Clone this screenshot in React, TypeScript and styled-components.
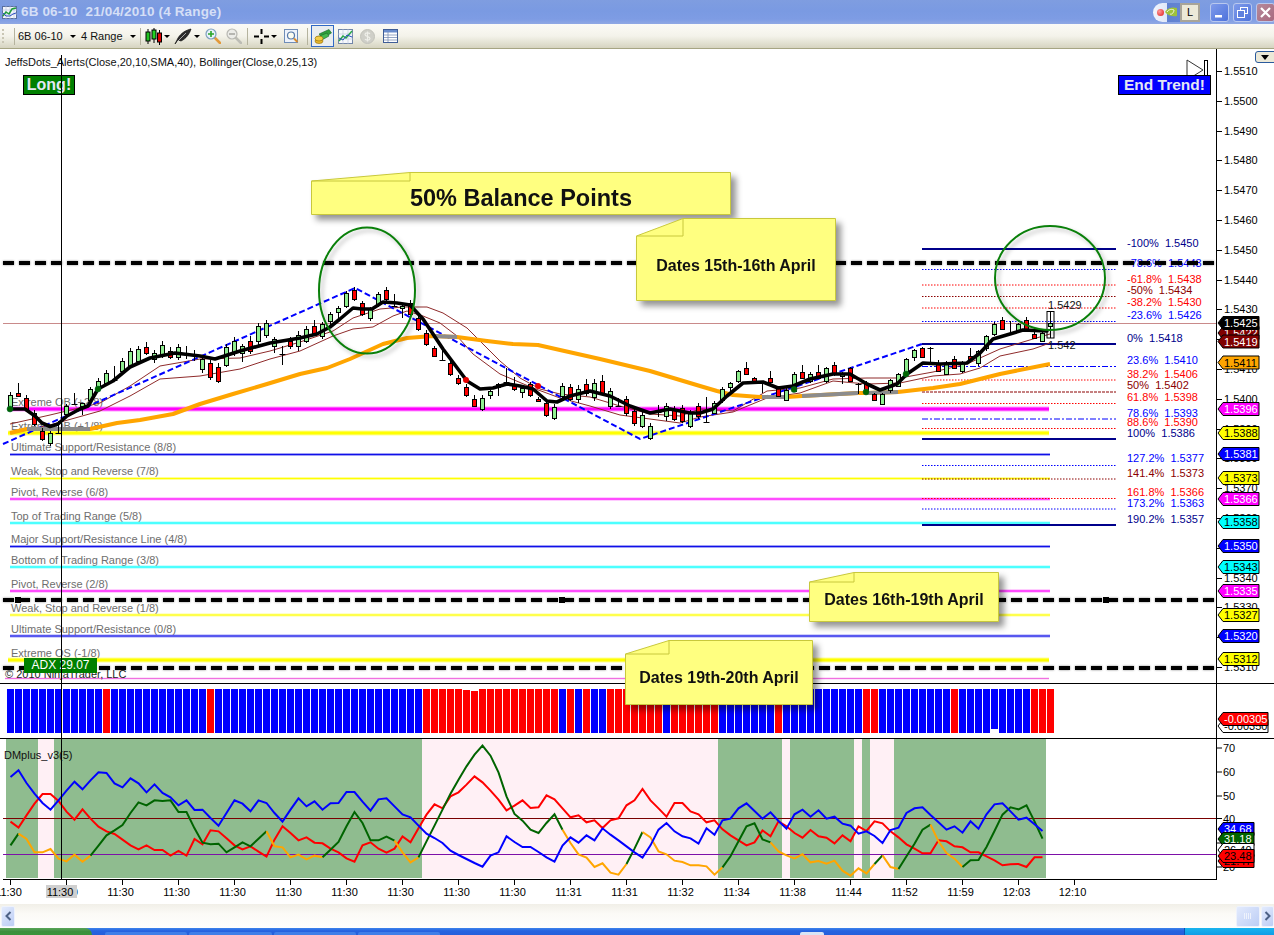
import styled, { createGlobalStyle } from "styled-components";

const GlobalStyle = createGlobalStyle`
  html, body { margin: 0; padding: 0; background: #fff; }
  body { font-family: "Liberation Sans", Arial, sans-serif; overflow: hidden; }
`;

const Window = styled.div`
  width: 1274px;
  height: 935px;
  display: flex;
  flex-direction: column;
  overflow: hidden;
`;

/* ---------- title bar ---------- */
const TitleBar = styled.div`
  flex: none;
  height: 24px;
  display: flex;
  align-items: center;
  padding-left: 2px;
  background: linear-gradient(180deg, #7f9de0 0%, #7a9ae2 45%, #7e9ce4 80%, #90a8e4 100%);
`;
const TitleText = styled.span`
  margin: 0 0 2px 4px;
  font: bold 13.5px "Liberation Sans", Arial, sans-serif;
  letter-spacing: 0.15px;
  white-space: pre;
  color: #d5dff6;
`;
const TitleSpacer = styled.div`
  flex: 1;
`;
const TrayCapsule = styled.div`
  width: 47px;
  height: 19px;
  margin-right: 10px;
  display: flex;
  align-items: center;
  border-radius: 10px 0 0 10px;
  background: linear-gradient(90deg, #f2f5fc 0, #dfe7f8 14px, #5f80d0 14px, #6a8ad8 100%);
  position: relative;
`;
const TrayDot = styled.span`
  width: 7px;
  height: 7px;
  margin-left: 4px;
  border-radius: 50%;
  background: radial-gradient(circle at 35% 35%, #ff9a9a, #e01818);
`;
const TrayL = styled.span`
  position: absolute;
  right: 0;
  top: 0;
  width: 20px;
  height: 19px;
  box-sizing: border-box;
  border: 2px solid #a8a498;
  background: #ece9d8;
  color: #000;
  font-size: 11px;
  line-height: 15px;
  text-align: center;
`;
const WinButton = styled.div<{ $close?: boolean }>`
  width: 19px;
  height: 19px;
  margin-right: 4px;
  box-sizing: border-box;
  border-radius: 3px;
  border: 1px solid #b9c8ee;
  background: ${(p) => (p.$close ? "linear-gradient(135deg,#b58a9c,#a8697e)" : "linear-gradient(135deg,#7f9bea,#4d72dc)")};
  display: flex;
  align-items: center;
  justify-content: center;
  &:last-child {
    margin-right: -1px;
  }
`;

/* ---------- toolbar ---------- */
const Toolbar = styled.div`
  flex: none;
  height: 25px;
  box-sizing: border-box;
  display: flex;
  align-items: center;
  padding-left: 2px;
  background: linear-gradient(180deg, #fbfaf6 0%, #f4f3ea 50%, #d6d4c0 100%);
  border-bottom: 1px solid #a6a583;
`;
const Grip = styled.div`
  width: 2px;
  height: 14px;
  margin-right: 7px;
  background: repeating-linear-gradient(180deg, #c9c6b4 0 2px, transparent 2px 4px);
`;
const ToolSep = styled.div`
  width: 1px;
  height: 17px;
  margin: 0 3px;
  background: #b5b39e;
`;
const ToolText = styled.span<{ $w: number }>`
  width: ${(p) => p.$w}px;
  font-size: 11px;
  color: #111;
  white-space: nowrap;
  display: flex;
  align-items: center;
  gap: 7px;
`;
const Caret = styled.i`
  width: 0;
  height: 0;
  border-left: 3px solid transparent;
  border-right: 3px solid transparent;
  border-top: 3px solid #000;
`;
const ToolIcon = styled.div<{ $w: number; $active?: boolean }>`
  width: ${(p) => p.$w}px;
  height: 22px;
  box-sizing: border-box;
  display: flex;
  align-items: center;
  justify-content: center;
  gap: 2px;
  flex: none;
  ${(p) => (p.$active ? "border: 1px solid #316ac5; background: #e9edef;" : "")}
`;

/* ---------- chart ---------- */
const ChartArea = styled.div`
  position: relative;
  flex: none;
  height: 855px;
  display: flex;
  flex-direction: column;
  background: #fff;
`;
const Pane = styled.div<{ $h: number; $divider?: boolean }>`
  flex: none;
  height: ${(p) => p.$h}px;
  box-sizing: border-box;
  display: flex;
  ${(p) => (p.$divider ? "border-top: 1px solid #000;" : "")}
`;
const Plot = styled.svg`
  display: block;
  flex: none;
  width: 1216px;
  height: 100%;
  font-family: "Liberation Sans", Arial, sans-serif;
  font-size: 11px;
`;
const PriceAxis = styled.svg`
  display: block;
  flex: none;
  width: 58px;
  height: 100%;
  border-left: 1px solid #000;
  box-sizing: border-box;
  font-family: "Liberation Sans", Arial, sans-serif;
  font-size: 11px;
`;
const TimeStrip = styled.svg`
  display: block;
  width: 1274px;
  height: 100%;
  font-family: "Liberation Sans", Arial, sans-serif;
  font-size: 11px;
`;
const Level = styled.text`
  fill: #6e6e6e;
`;
const Ring = styled.ellipse`
  fill: none;
  stroke: #0a800a;
  stroke-width: 2;
  filter: drop-shadow(3px 3px 2px rgba(0, 0, 0, 0.28));
`;
const HeavyDash = styled.line`
  stroke: #000;
  stroke-width: 4;
  stroke-dasharray: 11 5;
  filter: drop-shadow(0 0 1px rgba(0, 0, 0, 0.45));
`;
const Crosshair = styled.div`
  position: absolute;
  left: 61px;
  top: 6px;
  height: 824px;
  width: 1px;
  background: #000;
  z-index: 3;
`;
const Badge = styled.div<{ $left: number; $w: number; $bg: string; $size: number }>`
  position: absolute;
  left: ${(p) => p.$left}px;
  top: 26px;
  width: ${(p) => p.$w}px;
  height: 20px;
  box-sizing: border-box;
  border: 1px solid #000;
  background: ${(p) => p.$bg};
  color: #e4e8f4;
  font: bold ${(p) => p.$size}px/18px "Liberation Sans", Arial, sans-serif;
  text-align: center;
  white-space: nowrap;
`;
const AdxBadge = styled.div`
  position: absolute;
  left: 24px;
  top: 609px;
  width: 73px;
  height: 15px;
  background: #008000;
  color: #fff;
  font-size: 12px;
  line-height: 15px;
  text-align: center;
`;
const CornerButton = styled.div`
  position: absolute;
  left: 1255px;
  top: 2px;
  width: 24px;
  height: 12px;
  box-sizing: border-box;
  border: 1px solid #2a5a9c;
  border-radius: 3px;
  background: #ece9d8;
  display: flex;
  justify-content: center;
  padding-top: 3px;
  padding-right: 5px;
  z-index: 2;
`;
const CornerCaret = styled.i`
  width: 0;
  height: 0;
  border-left: 4px solid transparent;
  border-right: 4px solid transparent;
  border-top: 5px solid #000;
`;
const Note = styled.div<{ $left: number; $top: number; $w: number; $h: number }>`
  position: absolute;
  left: ${(p) => p.$left}px;
  top: ${(p) => p.$top}px;
  width: ${(p) => p.$w}px;
  height: ${(p) => p.$h}px;
  display: flex;
  align-items: center;
  justify-content: center;
  filter: drop-shadow(5px 5px 3px rgba(0, 0, 0, 0.42));
  z-index: 4;
`;
const NoteShape = styled.svg`
  position: absolute;
  inset: 0;
  overflow: visible;
`;
const NoteText = styled.span<{ $size: number; $dy: number }>`
  position: relative;
  margin-top: ${(p) => p.$dy}px;
  font: bold ${(p) => p.$size}px "Liberation Sans", Arial, sans-serif;
  color: #111;
  white-space: nowrap;
`;

/* ---------- scrollbar + taskbar ---------- */
const ScrollBar = styled.div`
  flex: none;
  height: 24px;
  display: flex;
  align-items: center;
  background: linear-gradient(180deg, #f1efe8 0%, #fbfaf6 40%, #fefefd 100%);
`;
const ScrollButton = styled.div<{ $w: number }>`
  width: ${(p) => p.$w}px;
  height: 21px;
  box-sizing: border-box;
  border: 1px solid #eef2fc;
  border-radius: 2px;
  background: linear-gradient(135deg, #e3ebfd, #bccdf5);
  display: flex;
  align-items: center;
  justify-content: center;
  flex: none;
  margin-left: 1px;
`;
const ScrollTrack = styled.div`
  flex: 1;
`;
const Taskbar = styled.div`
  flex: none;
  height: 7px;
  display: flex;
  background: linear-gradient(180deg, #3c83ec 0%, #2663e0 40%, #245edb 100%);
`;
const StartButton = styled.div`
  width: 92px;
  margin-right: 13px;
  border-radius: 0 10px 0 0;
  background: linear-gradient(180deg, #5aa55a 0%, #3c8f3c 50%, #389438 100%);
`;
const TaskItem = styled.div<{ $w: number; $light?: boolean }>`
  width: ${(p) => p.$w}px;
  margin: 4px 2px 0 0;
  border-radius: 2px 2px 0 0;
  background: ${(p) => (p.$light ? "#d9e4f5" : "#3f7ee8")};
`;
const TaskGap = styled.div`
  flex: 1;
`;
const TrayArea = styled.div`
  width: 89px;
  background: linear-gradient(180deg, #19b4ee, #0f9de6);
  border-left: 1px solid #0b4fb5;
`;

/* ---------- data ---------- */
type Pt = [number, number];
const pts = (list: Pt[]) => list.map((p) => p.join(",")).join(" ");

const priceY = (p: number) => 70 + (1.551 - p) * 29800;
const barX = (i: number) => 10.5 + 8 * i;
const dmY = (z: number) => 682 + z / 3;

// top, bottom, kind (u up, d down, x doji), wick top, wick bottom
type Candle = [number, number, "u" | "d" | "x", number?, number?];
const candles: Candle[] = [
  [394, 408, "u", 391, 410], [392, 395, "d", 382, 395], [397, 408, "d"], [412, 423, "d"], [430, 438, "d"],
  [432, 442, "u", 430, 445], [431, 432, "x", 420, 433], [405, 413, "u", 403, 415], [402, 403, "x", 392, 403], [402, 405, "u", 402, 414],
  [388, 399, "u", 386, 401], [380, 387, "u", 377, 390], [372, 382, "u"], [378, 379, "x", 365, 380], [360, 370, "u"],
  [350, 365, "u"], [348, 360, "u"], [346, 352, "d", 341, 354], [352, 358, "u", 349, 362], [344, 354, "u", 340, 357],
  [350, 356, "d", 346, 358], [346, 356, "u", 343, 359], [351, 352, "x", 345, 358], [352, 353, "x", 349, 360], [358, 368, "u", 356, 372],
  [362, 376, "d", 359, 379], [366, 380, "d", 362, 382], [346, 364, "u"], [340, 352, "u", 336, 355], [345, 352, "u", 343, 361],
  [340, 350, "d", 335, 353], [325, 340, "u", 322, 344], [322, 334, "u", 319, 337], [338, 345, "u", 336, 352], [352, 353, "x", 345, 364],
  [340, 345, "d", 336, 348], [334, 345, "u", 330, 350], [328, 340, "u", 325, 342], [325, 332, "d", 319, 334], [323, 335, "u", 321, 338],
  [313, 320, "u", 311, 325], [307, 311, "u", 305, 320], [292, 305, "u", 290, 307], [289, 298, "d", 286, 300], [302, 313, "d", 300, 315],
  [308, 317, "u", 306, 320], [293, 303, "u", 291, 306], [289, 298, "d", 286, 300], [304, 305, "x", 293, 306], [305, 307, "u", 303, 317],
  [302, 313, "d"], [317, 328, "d"], [332, 343, "d"], [347, 355, "d", 345, 356], [358, 359, "x", 346, 359],
  [362, 373, "d"], [377, 382, "d"], [386, 394, "d"], [398, 405, "d", 394, 406], [397, 408, "u"],
  [390, 394, "u", 389, 398], [383, 386, "u", 382, 395], [380, 381, "x", 367, 381], [383, 388, "d", 376, 390], [387, 391, "u", 386, 397],
  [383, 394, "d", 381, 396], [398, 400, "d", 396, 401], [402, 414, "d"], [406, 417, "u"], [385, 395, "u", 382, 399],
  [386, 398, "d", 383, 400], [388, 398, "u", 384, 402], [383, 392, "d", 378, 395], [382, 396, "u", 378, 400], [380, 392, "d", 374, 394],
  [390, 405, "u", 387, 408], [404, 405, "x", 397, 406], [398, 412, "d", 395, 415], [410, 422, "d", 407, 425], [414, 425, "u", 411, 427],
  [425, 437, "u", 422, 439], [410, 411, "x", 404, 416], [405, 415, "u", 402, 420], [408, 418, "d", 405, 420], [407, 420, "d", 404, 422],
  [412, 425, "u", 409, 427], [405, 415, "d", 402, 418], [420, 421, "x", 396, 421], [402, 412, "u", 400, 413], [388, 399, "u", 386, 402],
  [382, 386, "u", 381, 392], [370, 380, "u", 369, 382], [367, 373, "d", 361, 374], [377, 380, "d", 376, 382], [380, 381, "x", 380, 392],
  [377, 381, "d", 370, 383], [387, 395, "d", 385, 396], [389, 399, "u", 387, 400], [373, 390, "u", 371, 391], [371, 377, "d", 364, 378],
  [373, 380, "u", 371, 382], [371, 377, "d", 364, 378], [367, 380, "u", 366, 382], [364, 373, "d", 361, 375], [372, 375, "u", 371, 383],
  [367, 380, "d", 366, 381], [382, 383, "x", 382, 393], [382, 390, "d", 380, 392], [393, 399, "d", 392, 400], [393, 403, "u", 392, 404],
  [379, 389, "u", 378, 392], [373, 385, "u", 372, 386], [358, 372, "u", 357, 374], [349, 356, "u", 348, 360], [347, 356, "d", 346, 357],
  [346, 347, "x", 346, 362], [363, 370, "d", 359, 371], [362, 373, "u", 360, 374], [358, 367, "d", 355, 368], [362, 370, "u", 360, 372],
  [355, 358, "d", 347, 359], [350, 362, "u", 349, 365], [335, 347, "u", 334, 350], [323, 333, "u", 321, 335], [319, 328, "d", 316, 329],
  [331, 332, "x", 320, 332], [323, 330, "u", 322, 332], [319, 328, "d", 316, 329], [333, 337, "d", 326, 338], [332, 340, "u", 331, 341],
  [322, 325, "u", 311, 337],
];

const blackLine: Pt[] = [
  [10, 408], [25, 408], [35, 415], [42, 422], [50, 425.5], [58, 423], [67, 415], [80, 408], [88, 405], [98, 388], [113, 380], [130, 366],
  [150, 357], [175, 352], [200, 355], [215, 358], [240, 350], [270, 342], [300, 337], [317, 333], [330, 326], [340, 318], [353, 307], [362, 308],
  [372, 308], [383, 301], [397, 302], [410, 304], [423, 318], [443, 348], [467, 380], [480, 388], [493, 387], [507, 383], [520, 385], [533, 388],
  [547, 400], [557, 401], [570, 395], [590, 390], [610, 395], [630, 405], [650, 412], [670, 408], [690, 412], [700, 412], [713, 408], [727, 395],
  [743, 382], [763, 381], [778, 387], [793, 385], [810, 378], [833, 373], [850, 373], [867, 383], [880, 389], [897, 383], [907, 373], [923, 362],
  [940, 363], [967, 362], [980, 352], [993, 338], [1010, 333], [1023, 329], [1047, 330],
];

const orangeLine: Pt[] = [
  [10, 432], [27, 428], [90, 428], [117, 422], [140, 419], [173, 413], [200, 403], [233, 393], [267, 383], [300, 373], [327, 367], [350, 358],
  [383, 343], [407, 337], [433, 335], [457, 336], [487, 340], [513, 343], [538, 344], [560, 349], [600, 358], [650, 370], [700, 385], [717, 390],
  [733, 394], [760, 396], [787, 396], [802, 395], [858, 392], [867, 392], [898, 391], [933, 387], [960, 383], [1000, 373], [1050, 363],
];
const greyStretches: Pt[][] = [
  [[27, 428], [90, 428]],
  [[433, 335], [457, 336]],
  [[762, 396], [787, 396]],
  [[802, 395], [858, 392]],
  [[867, 392], [898, 391]],
];

const bandUpper: Pt[] = [
  [10, 423], [50, 414], [100, 402], [130, 385], [160, 365], [200, 358], [240, 357], [270, 350], [300, 341], [333, 330], [353, 317], [380, 308],
  [403, 306], [427, 306], [443, 312], [467, 327], [480, 340], [500, 360], [520, 377], [540, 388], [560, 393], [590, 396], [620, 405], [650, 413],
  [680, 415], [700, 408], [733, 410], [767, 390], [800, 387], [833, 378], [867, 377], [900, 377], [933, 371], [967, 363], [980, 357], [1000, 348],
  [1033, 338], [1050, 333],
];
const bandLower: Pt[] = [
  [10, 432], [50, 424], [100, 410], [130, 395], [160, 378], [200, 375], [240, 368], [270, 358], [300, 350], [333, 335], [353, 328], [373, 326],
  [393, 315], [407, 310], [423, 315], [440, 322], [457, 335], [473, 353], [500, 373], [533, 387], [560, 397], [590, 405], [620, 414], [650, 418],
  [680, 422], [700, 416], [733, 411], [767, 397], [800, 392], [833, 380], [867, 383], [900, 382], [933, 375], [960, 373], [980, 367], [1000, 355],
  [1033, 348], [1050, 342],
];

const darkDots: Pt[] = [[10, 408], [98, 388], [794, 388.5], [866, 391], [906, 373]];
const redDots: Pt[] = [[466, 379], [538, 385]];

const murreyLines: [number, number, string, number, number][] = [
  [408, 4, "#ff00ff", 10, 1049],
  [432, 4, "#ffff00", 8, 1049],
  [453.5, 2, "#1010e8", 10, 1050],
  [477.5, 2, "#ffff00", 10, 1050],
  [498, 2, "#ff00ff", 10, 1050],
  [522, 2, "#00ffff", 10, 1050],
  [545.5, 2, "#1010e8", 10, 1050],
  [566, 2, "#00ffff", 10, 1050],
  [590, 2, "#ff00ff", 10, 1050],
  [614, 2, "#ffff00", 10, 1050],
  [635, 2, "#1010e8", 10, 1050],
  [659, 4, "#ffff00", 8, 1049],
  [677.5, 1, "#f070e0", 5, 1049],
];
const murreyLabels: [string, number][] = [
  ["Extreme OB (+2/8)", 405],
  ["Extreme OB (+1/8)", 429],
  ["Ultimate Support/Resistance (8/8)", 450],
  ["Weak, Stop and Reverse (7/8)", 474],
  ["Pivot, Reverse (6/8)", 495],
  ["Top of Trading Range (5/8)", 519],
  ["Major Support/Resistance Line (4/8)", 542],
  ["Bottom of Trading Range (3/8)", 563],
  ["Pivot, Reverse (2/8)", 587],
  ["Weak, Stop and Reverse (1/8)", 611],
  ["Ultimate Support/Resistance (0/8)", 632],
  ["Extreme OS (-1/8)", 656],
];

const NAVY = "#00008b";
const BLUE = "#0000ff";
const RED = "#ff0000";
const MAROON = "#8b0000";
const DOT = "1.5 1.5";
const DASHDOT = "6 2 2 2";
const fibs: [string, string, number, number, string, string | null][] = [
  ["-100%", "1.5450", 248, 246, NAVY, null],
  ["-78.6%", "1.5443", 268.5, 266, BLUE, DOT],
  ["-61.8%", "1.5438", 284, 282, RED, DOT],
  ["-50%", "1.5434", 295.5, 293, MAROON, DOT],
  ["-38.2%", "1.5430", 307, 305, RED, DOT],
  ["-23.6%", "1.5426", 320.5, 318, BLUE, DOT],
  ["0%", "1.5418", 343, 341, NAVY, null],
  ["23.6%", "1.5410", 365.5, 363.5, BLUE, DASHDOT],
  ["38.2%", "1.5406", 379, 377, RED, DOT],
  ["50%", "1.5402", 391, 388.5, MAROON, "3 1"],
  ["61.8%", "1.5398", 402.5, 400, RED, DOT],
  ["78.6%", "1.5393", 418, 416, BLUE, DASHDOT],
  ["88.6%", "1.5390", 427.5, 425, RED, DOT],
  ["100%", "1.5386", 438, 436, NAVY, null],
  ["127.2%", "1.5377", 464.5, 461.5, BLUE, DOT],
  ["141.4%", "1.5373", 478, 476, MAROON, DOT],
  ["161.8%", "1.5366", 497.5, 495, RED, DOT],
  ["173.2%", "1.5363", 508, 506, BLUE, DOT],
  ["190.2%", "1.5357", 524, 522, NAVY, null],
];

const priceTicks = [
  "1.5510", "1.5500", "1.5490", "1.5480", "1.5470", "1.5460", "1.5450", "1.5440", "1.5430", "1.5420", "1.5410",
  "1.5400", "1.5390", "1.5380", "1.5370", "1.5360", "1.5350", "1.5340", "1.5330", "1.5320", "1.5310",
];
const priceTags: [string, number, string, string][] = [
  ["1.5422", 332, "#800000", "#fff"],
  ["1.5425", 322, "#000", "#fff"],
  ["1.5419", 340.5, "#800000", "#fff"],
  ["1.5411", 361.5, "#ffa500", "#000"],
  ["1.5396", 408, "#ff00ff", "#fff"],
  ["1.5388", 432, "#ffff00", "#000"],
  ["1.5381", 453, "#0000ff", "#fff"],
  ["1.5373", 477, "#ffff00", "#000"],
  ["1.5366", 498, "#ff00ff", "#fff"],
  ["1.5358", 521, "#00ffff", "#000"],
  ["1.5350", 545, "#0000ff", "#fff"],
  ["1.5343", 566, "#00ffff", "#000"],
  ["1.5335", 590, "#ff00ff", "#fff"],
  ["1.5327", 614, "#ffff00", "#000"],
  ["1.5320", 635, "#0000ff", "#fff"],
  ["1.5312", 658, "#ffff00", "#000"],
];

const redBars = new Set([
  12, 25, 52, 53, 54, 55, 56, 57, 58, 59, 60, 61, 62, 63, 64, 65, 66, 67, 68, 70, 72, 75, 76, 77, 78, 79, 80, 81, 83, 84, 85, 86,
  87, 88, 96, 107, 108, 118, 128, 129, 130,
]);

const dmBands: [number, number, string][] = [
  [6, 38, "#8fbc8f"],
  [38, 54, "#fff0f5"],
  [54, 422, "#8fbc8f"],
  [422, 718, "#fff0f5"],
  [718, 782, "#8fbc8f"],
  [782, 790, "#fff0f5"],
  [790, 854, "#8fbc8f"],
  [854, 862, "#fff0f5"],
  [862, 870, "#8fbc8f"],
  [870, 894, "#fff0f5"],
  [894, 1046, "#8fbc8f"],
];

const diPlus = [
  282, 262, 300, 332, 360, 380, 352, 323, 296, 319, 292, 268, 270, 301, 313, 286, 301, 328, 304, 330, 343, 367, 352, 381, 380, 405, 428, 390, 352, 362,
  385, 352, 360, 390, 416, 380, 346, 370, 355, 380, 361, 360, 327, 327, 356, 383, 349, 346, 370, 394, 403, 428, 452, 465, 480, 503, 516, 528, 540, 551,
  518, 508, 460, 477, 492, 492, 507, 523, 536, 488, 463, 479, 457, 472, 436, 455, 472, 490, 508, 524, 487, 440, 420, 445, 460, 466, 482, 436, 455, 412,
  407, 376, 361, 384, 407, 388, 414, 437, 394, 380, 401, 382, 407, 401, 422, 428, 452, 445, 459, 480, 441, 434, 390, 376, 373, 396, 418, 440, 430, 449,
  415, 437, 394, 364, 361, 385, 410, 404, 424, 444,
];
const diMinus = [
  416, 434, 397, 362, 333, 333, 354, 386, 410, 379, 407, 431, 445, 453, 470, 487, 499, 487, 501, 501, 518, 504, 518, 468, 484, 442, 445, 466, 487, 499,
  490, 506, 521, 470, 430, 450, 472, 463, 479, 481, 497, 508, 526, 536, 487, 478, 497, 509, 497, 460, 478, 436, 395, 364, 376, 340, 328, 305, 280, 298,
  323, 350, 382, 368, 352, 375, 373, 337, 349, 376, 403, 397, 418, 412, 435, 412, 406, 367, 352, 318, 352, 376, 401, 360, 360, 385, 394, 418, 412, 439,
  457, 472, 487, 478, 442, 460, 415, 430, 450, 464, 441, 460, 464, 481, 457, 475, 430, 444, 415, 421, 445, 463, 484, 497, 511, 511, 472, 475, 490, 493,
  508, 508, 520, 532, 547, 544, 543, 552, 523, 523,
];
const adx = [
  487, 452, 468, 508, 508, 498, 527, 535, 515, 536, 518, 488, 457, 442, 426, 390, 358, 367, 352, 354, 352, 387, 387, 436, 479, 484, 482, 508, 493, 478,
  490, 467, 445, 490, 493, 523, 515, 529, 518, 523, 500, 477, 430, 387, 420, 472, 472, 461, 473, 508, 538, 523, 475, 428, 380, 332, 290, 250, 215, 188,
  218, 268, 340, 393, 413, 440, 450, 420, 394, 440, 480, 514, 524, 552, 541, 569, 575, 543, 497, 447, 463, 505, 514, 533, 537, 547, 547, 550, 575, 553,
  520, 475, 430, 421, 469, 478, 505, 517, 526, 514, 538, 534, 542, 533, 563, 578, 556, 571, 543, 517, 552, 558, 520, 482, 440, 425, 475, 510, 527, 552,
  532, 531, 492, 444, 395, 373, 379, 367, 415, 467,
];
// adx colour flips between rising and falling stretches
const adxStretches: [number, number, string][] = [
  [0, 1, "#006400"], [1, 10, "#ffa500"], [10, 32, "#006400"], [32, 39, "#ffa500"], [39, 48, "#006400"], [48, 51, "#ffa500"],
  [51, 69, "#006400"], [69, 77, "#ffa500"], [77, 79, "#006400"], [79, 89, "#ffa500"], [89, 95, "#006400"], [95, 108, "#ffa500"],
  [108, 109, "#006400"], [109, 111, "#ffa500"], [111, 115, "#006400"], [115, 119, "#ffa500"], [119, 129, "#006400"],
];
const dmLine = (values: number[], from = 0, to = values.length - 1) =>
  pts(values.slice(from, to + 1).map((z, i): Pt => [barX(from + i), dmY(z)]));

const timeLabels = [
  "11:30", "11:30", "11:30", "11:30", "11:30", "11:30", "11:30", "11:30", "11:30", "11:30", "11:31", "11:31", "11:32", "11:34", "11:38", "11:44",
  "11:52", "11:59", "12:03", "12:10",
];

/* ---------- little drawings ---------- */
const Tag = ({ y, label, fill, color, right = 1259 }: { y: number; label: string; fill: string; color: string; right?: number }) => (
  <g>
    <polygon
      points={pts([[1218, y], [1223, y - 6.5], [right, y - 6.5], [right, y + 6.5], [1223, y + 6.5]])}
      fill={fill}
      stroke="#000"
    />
    <text x={1224} y={y + 4} fill={color}>
      {label}
    </text>
  </g>
);

const AppIcon = () => (
  <svg width="15" height="15" viewBox="0 0 15 15">
    <rect x="0.5" y="1.5" width="14" height="12" fill="#f4f6fb" stroke="#5a6f9e" />
    <path d="M0 5h15M0 9h15M4 1v13M8 1v13M12 1v13" stroke="#b7c4de" strokeWidth="0.6" />
    <polyline points="1,11 4,7 7,9 10,4 14,3" fill="none" stroke="#1f9c3a" strokeWidth="1.5" />
    <polyline points="1,8 4,11 8,11 11,9 14,8" fill="none" stroke="#2c4fc2" strokeWidth="1" />
  </svg>
);
const CandlesIcon = () => (
  <svg width="17" height="17" viewBox="0 0 17 17">
    <path d="M3 1v15M9 0v15M14.500 2v15" stroke="#000" />
    <rect x="1" y="4" width="4" height="9" fill="#22c322" stroke="#000" />
    <rect x="7" y="2" width="4" height="9" fill="#22d322" stroke="#000" />
    <rect x="12.500" y="5" width="4" height="9" fill="#e00000" stroke="#000" />
  </svg>
);
const PenIcon = () => (
  <svg width="18" height="17" viewBox="0 0 18 17">
    <path d="M1 16 L4 10 C7 5 12 2 17 1 C16 5 12 11 7 13 L4 12 Z" fill="#2c2c2c" stroke="#000" strokeWidth="0.6" />
    <path d="M3 14 L12 5" stroke="#c8c8c8" strokeWidth="0.8" />
  </svg>
);
const ZoomIcon = ({ active, plus }: { active: boolean; plus: boolean }) => (
  <svg width="16" height="16" viewBox="0 0 16 16">
    <path d="M9.500 9.500L15 15" stroke={active ? "#e39a3b" : "#bdbdb5"} strokeWidth="2.600" strokeLinecap="round" />
    <circle cx="6" cy="6" r="5" fill={active ? "#e8f2fa" : "#ecece8"} stroke={active ? "#7e9fbe" : "#b8b8b2"} strokeWidth="1.200" />
    <path d={plus ? "M3 6h6M6 3v6" : "M3 6h6"} stroke={active ? "#2aa52a" : "#a9a9a3"} strokeWidth="1.600" />
  </svg>
);
const CrossIcon = () => (
  <svg width="15" height="15" viewBox="0 0 15 15">
    <path d="M0 7.500h5M10 7.500h5M7.500 0v5M7.500 10v5" stroke="#000" strokeWidth="2" />
  </svg>
);
const FindIcon = () => (
  <svg width="15" height="16" viewBox="0 0 15 16">
    <rect x="0.500" y="1.500" width="13" height="13" fill="#eef3fb" stroke="#6f8db8" />
    <circle cx="7" cy="7.500" r="3.500" fill="#fdfdf0" stroke="#5678a8" strokeWidth="1.200" />
    <path d="M10 10.500l3.500 3.500" stroke="#d98c2c" strokeWidth="2" />
  </svg>
);
const MoneyIcon = () => (
  <svg width="18" height="17" viewBox="0 0 18 17">
    <path d="M5 6 L15 1.500 L17.500 5 L9 10 Z" fill="#2f9e3a" stroke="#17652a" strokeWidth="0.600" />
    <path d="M3 9 L13 5 L15 8 L7 12.500 Z" fill="#43b84d" stroke="#17652a" strokeWidth="0.600" />
    <ellipse cx="5" cy="13" rx="4" ry="2.500" fill="#e9b82c" stroke="#97740e" strokeWidth="0.700" />
    <ellipse cx="5" cy="10.500" rx="4" ry="2.500" fill="#f3cc45" stroke="#97740e" strokeWidth="0.700" />
  </svg>
);
const ChartIcon = () => (
  <svg width="15" height="15" viewBox="0 0 15 15">
    <rect x="0.500" y="0.500" width="14" height="14" fill="#f6f8fc" stroke="#7286a8" />
    <path d="M0 5h15M0 10h15M5 0v15M10 0v15" stroke="#b8c4d8" strokeWidth="0.600" />
    <polyline points="1,12 5,7 8,9 14,2" fill="none" stroke="#2aa84a" strokeWidth="1.500" />
    <polyline points="1,9 5,11 9,6 14,8" fill="none" stroke="#274fbe" strokeWidth="1" />
  </svg>
);
const CoinIcon = () => (
  <svg width="15" height="15" viewBox="0 0 15 15">
    <circle cx="7.500" cy="7.500" r="7" fill="#cfcfc8" stroke="#c2c2ba" />
    <path d="M10 5c-1-1.500-5-1.500-5 .5 0 2.500 5 1.500 5 4 0 2-4 2-5 .5M7.500 2.500v10" fill="none" stroke="#efefe9" strokeWidth="1.200" />
  </svg>
);
const GridIcon = () => (
  <svg width="15" height="14" viewBox="0 0 15 14">
    <rect x="0.500" y="0.500" width="14" height="13" fill="#fff" stroke="#3f5d96" />
    <rect x="1" y="1" width="13" height="2.500" fill="#6a8ccc" />
    <path d="M1 6h13M1 8.500h13M1 11h13M5 3v10" stroke="#7b8fb5" strokeWidth="0.800" />
  </svg>
);
const MinGlyph = () => (
  <svg width="11" height="11" viewBox="0 0 11 11">
    <rect x="1" y="8" width="7" height="2.500" fill="#fff" />
  </svg>
);
const RestoreGlyph = () => (
  <svg width="11" height="11" viewBox="0 0 11 11" fill="none" stroke="#fff">
    <rect x="3.500" y="0.500" width="7" height="6" />
    <rect x="0.500" y="3.500" width="7" height="7" fill="#5e80de" />
  </svg>
);
const CloseGlyph = () => (
  <svg width="11" height="11" viewBox="0 0 11 11">
    <path d="M1 1l9 9M10 1l-9 9" stroke="#fff" strokeWidth="2.200" />
  </svg>
);
const NvidiaGlyph = () => (
  <svg width="14" height="12" viewBox="0 0 14 12">
    <path d="M1 6C4 1 10 1 13 2v8C9 11 4 10 1 6z" fill="#9ec23a" />
    <path d="M3 6c2-3 5-3 7-2 0 2-2 5-4 4" fill="none" stroke="#f4f6e6" />
  </svg>
);
const ChevronIcon = ({ dir }: { dir: "left" | "right" }) => (
  <svg width="7" height="10" viewBox="0 0 7 10">
    <path d={dir === "left" ? "M5.500 1L1.500 5l4 4" : "M1.500 1l4 4-4 4"} fill="none" stroke="#4d6185" strokeWidth="2" />
  </svg>
);
const ThumbGrip = () => (
  <svg width="8" height="8" viewBox="0 0 8 8">
    <path d="M.5 1v6M2.500 1v6M4.500 1v6M6.500 1v6" stroke="#eef2fc" />
  </svg>
);

const Callout = ({ left, top, w, h, earX, earY, size, dy, children }: {
  left: number; top: number; w: number; h: number; earX: number; earY: number; size: number; dy: number; children: string;
}) => (
  <Note $left={left} $top={top - 48} $w={w} $h={h}>
    <NoteShape width={w} height={h} viewBox={`0 0 ${w} ${h}`}>
      <polygon points={pts([[0.5, earY], [earX, 0.5], [w - 0.5, 0.5], [w - 0.5, h - 0.5], [0.5, h - 0.5]])} fill="#ffff80" stroke="#c8c83c" />
      <path d={`M0.500 ${earY}H${earX}V0.500`} fill="none" stroke="#c8c83c" />
    </NoteShape>
    <NoteText $size={size} $dy={dy}>{children}</NoteText>
  </Note>
);

/* ---------- panes ---------- */
const MainPlot = () => (
  <Plot viewBox="0 48 1216 634">
    <text x={5} y={65} fill="#111">JeffsDots_Alerts(Close,20,10,SMA,40), Bollinger(Close,0.25,13)</text>
    <polygon points="1187,59 1187,79 1203,69" fill="#fff" stroke="#333" />
    <rect x={1204.500} y={59.500} width={3} height={20} fill="#fff" stroke="#000" />

    <line x1={3} x2={1216} y1={322.500} y2={322.500} stroke="#c98a8a" />

    {murreyLabels.map(([label, y]) => (
      <Level key={label + y} x={11} y={y}>{label}</Level>
    ))}
    {murreyLines.map(([y, w, color, x1, x2]) => (
      <g key={y}>
        <line x1={x1} x2={x2} y1={y} y2={y} stroke={color} strokeWidth={w + 1} strokeOpacity={0.4} />
        <line x1={x1} x2={x2} y1={y} y2={y} stroke={color} strokeWidth={w - 1 || 1} />
      </g>
    ))}
    <text x={5} y={677} fill="#222">© 2010 NinjaTrader, LLC</text>

    {fibs.map(([pct, value, y, labelY, color, dash]) => (
      <g key={pct}>
        <line x1={922} x2={1116} y1={y} y2={y} stroke={color} strokeWidth={dash ? 1 : 2} strokeDasharray={dash ?? undefined} />
        <text x={1127} y={labelY - 0.5} fill={color}>{pct}{"\u00a0\u00a0"}{value}</text>
      </g>
    ))}
    <text x={1048} y={308} fill="#111">1.5429</text>
    <text x={1048} y={348} fill="#111">1.542</text>

    <polyline points={pts(bandUpper)} fill="none" stroke="#8f2b2b" strokeWidth={1} />
    <polyline points={pts(bandLower)} fill="none" stroke="#8f2b2b" strokeWidth={1} />
    <polyline points="3,443 355,287 640,438 922,343" fill="none" stroke="#0000ff" strokeWidth={2} strokeDasharray="6 3" />
    <polyline points={pts(orangeLine)} fill="none" stroke="#ffa500" strokeWidth={4} strokeLinejoin="round" />
    {greyStretches.map((s) => (
      <polyline key={s[0][0]} points={pts(s)} fill="none" stroke="#8c8c8c" strokeWidth={4} />
    ))}

    {candles.map(([top, bottom, kind, wt, wb], i) => {
      const x = Math.floor(barX(i)) + 0.5;
      const wickTop = wt ?? top - 3;
      const wickBottom = wb ?? bottom + 2;
      return (
        <g key={i}>
          <line x1={x} x2={x} y1={wickTop} y2={wickBottom} stroke="#000" />
          {kind === "x" ? (
            <line x1={x - 3} x2={x + 3} y1={bottom + 0.5} y2={bottom + 0.5} stroke="#000" />
          ) : (
            <rect x={x - 2} y={top + 0.5} width={4} height={bottom - top} fill={kind === "u" ? "#90ee90" : "#ff0000"} stroke="#000" />
          )}
        </g>
      );
    })}
    <rect x={1047} y={310.500} width={7} height={26.500} fill="none" stroke="#000" />

    <polyline points={pts(blackLine)} fill="none" stroke="#000" strokeWidth={3.600} strokeLinejoin="round" strokeLinecap="round" />
    {darkDots.map(([x, y]) => (
      <circle key={x} cx={x} cy={y} r={3} fill="#006400" stroke="#063" strokeWidth={0.5} />
    ))}
    {redDots.map(([x, y]) => (
      <circle key={x} cx={x} cy={y} r={3} fill="#e80000" />
    ))}

    <HeavyDash x1={3} x2={1215} y1={262} y2={262} />
    <HeavyDash x1={3} x2={1215} y1={599} y2={599} />
    <HeavyDash x1={3} x2={1215} y1={667} y2={667} />
    {[18, 562, 1106].map((x) => (
      <rect key={x} x={x - 3} y={596} width={6} height={6} fill="#000" />
    ))}

    <Ring cx={367} cy={289.500} rx={48} ry={63} />
    <Ring cx={1050} cy={277} rx={55} ry={52} />
  </Plot>
);

const MainAxis = () => (
  <PriceAxis viewBox="1217 48 57 634">
    {priceTicks.map((t) => (
      <g key={t}>
        <line x1={1217} x2={1222} y1={Math.round(priceY(+t)) + 0.5} y2={Math.round(priceY(+t)) + 0.5} stroke="#000" />
        <text x={1224} y={priceY(+t) + 4} fill="#000">{t}</text>
      </g>
    ))}
    {priceTags.map(([label, y, fill, color]) => (
      <Tag key={label} y={y} label={label} fill={fill} color={color} />
    ))}
  </PriceAxis>
);

const StripPlot = () => (
  <Plot viewBox="0 683 1216 54">
    {Array.from({ length: 131 }, (_, i) => (
      <rect
        key={i}
        x={7 + 8 * i}
        y={i === 57 ? 689 : i === 58 ? 690 : 688}
        width={7}
        height={(i === 57 ? 43 : i === 58 ? 42 : 44) - (i === 123 ? 4 : 0)}
        fill={redBars.has(i) ? "#ff0000" : "#0000ff"}
      />
    ))}
  </Plot>
);

const StripAxis = () => (
  <PriceAxis viewBox="1217 683 57 54">
    <Tag y={725} label="-0.00350" fill="#fff" color="#000" right={1268} />
    <Tag y={718} label="-0.00305" fill="#ff0000" color="#fff" right={1268} />
  </PriceAxis>
);

const DmPlot = () => (
  <Plot viewBox="0 738 1216 140">
    {dmBands.map(([x1, x2, fill]) => (
      <rect key={x1} x={x1} y={737} width={x2 - x1} height={140} fill={fill} />
    ))}
    <line x1={3} x2={1216} y1={817.500} y2={817.500} stroke="#7a0000" />
    <line x1={3} x2={1216} y1={853.500} y2={853.500} stroke="#7d10a8" />
    <polyline points={dmLine(diMinus)} fill="none" stroke="#ff0000" strokeWidth={2} />
    {adxStretches.map(([from, to, color]) => (
      <polyline key={from} points={dmLine(adx, from, to)} fill="none" stroke={color} strokeWidth={2} />
    ))}
    <polyline points={dmLine(diPlus)} fill="none" stroke="#0000ff" strokeWidth={2} />
    <text x={4} y={758} fill="#111">DMplus_v3(5)</text>
  </Plot>
);

const DmAxis = () => (
  <PriceAxis viewBox="1217 738 57 140">
    {[[70, 747], [60, 771], [50, 795], [40, 817.500], [30, 842], [20, 866]].map(([v, y]) => (
      <g key={v}>
        <line x1={1217} x2={1222} y1={y} y2={y} stroke="#000" />
        <text x={1223} y={y + 4} fill="#000">{v}</text>
      </g>
    ))}
    <Tag y={828} label="34.68" fill="#0000ff" color="#fff" right={1254} />
    <Tag y={838} label="31.18" fill="#006400" color="#fff" right={1254} />
    <Tag y={849} label="26.40" fill="#fff" color="#000" right={1254} />
    <Tag y={860} label="21.47" fill="#ff0000" color="#000" right={1254} />
    <Tag y={855} label="23.48" fill="#ff0000" color="#000" right={1254} />
  </PriceAxis>
);

const TimeAxis = () => (
  <TimeStrip viewBox="0 878 1274 26">
    <line x1={3} x2={1217} y1={878.500} y2={878.500} stroke="#000" />
    {timeLabels.map((t, i) => {
      const x = 10 + 56 * i;
      return (
        <g key={i}>
          <line x1={x + 0.5} x2={x + 0.5} y1={878} y2={884} stroke="#000" />
          <text x={x - 1.5} y={895} textAnchor="middle" fill="#000">{t}</text>
        </g>
      );
    })}
    <rect x={46} y={884} width={31} height={13} fill="#cfcfcf" />
    <text x={60} y={895} textAnchor="middle" fill="#000">11:30</text>
  </TimeStrip>
);

export default function App() {
  return (
    <Window>
      <GlobalStyle />
      <TitleBar>
        <AppIcon />
        <TitleText>6B 06-10  21/04/2010 (4 Range)</TitleText>
        <TitleSpacer />
        <TrayCapsule>
          <TrayDot />
          <NvidiaGlyph />
          <TrayL>L</TrayL>
        </TrayCapsule>
        <WinButton><MinGlyph /></WinButton>
        <WinButton><RestoreGlyph /></WinButton>
        <WinButton $close><CloseGlyph /></WinButton>
      </TitleBar>

      <Toolbar>
        <Grip />
        <ToolSep />
        <ToolText $w={63}>6B 06-10 <Caret /></ToolText>
        <ToolText $w={56}>4 Range <Caret /></ToolText>
        <ToolSep />
        <ToolIcon $w={27}><CandlesIcon /><Caret /></ToolIcon>
        <ToolIcon $w={31}><PenIcon /><Caret /></ToolIcon>
        <ToolIcon $w={21}><ZoomIcon active plus /></ToolIcon>
        <ToolIcon $w={21}><ZoomIcon active={false} plus={false} /></ToolIcon>
        <ToolSep />
        <ToolIcon $w={28}><CrossIcon /><Caret /></ToolIcon>
        <ToolIcon $w={25}><FindIcon /></ToolIcon>
        <ToolSep />
        <ToolIcon $w={23} $active><MoneyIcon /></ToolIcon>
        <ToolIcon $w={22}><ChartIcon /></ToolIcon>
        <ToolIcon $w={22}><CoinIcon /></ToolIcon>
        <ToolIcon $w={24}><GridIcon /></ToolIcon>
      </Toolbar>

      <ChartArea>
        <Pane $h={634}>
          <MainPlot />
          <MainAxis />
        </Pane>
        <Pane $h={55} $divider>
          <StripPlot />
          <StripAxis />
        </Pane>
        <Pane $h={141} $divider>
          <DmPlot />
          <DmAxis />
        </Pane>
        <Pane $h={26}>
          <TimeAxis />
        </Pane>

        <Crosshair />
        <Badge $left={23} $w={52} $bg="#008000" $size={16}>Long!</Badge>
        <Badge $left={1118} $w={93} $bg="#0000ff" $size={15.5}>End Trend!</Badge>
        <AdxBadge>ADX 29.07</AdxBadge>
        <CornerButton><CornerCaret /></CornerButton>

        <Callout left={311} top={171} w={420} h={43} earX={99} earY={9} size={23.5} dy={9}>50% Balance Points</Callout>
        <Callout left={636} top={217} w={200} h={83} earX={47} earY={18} size={16} dy={13}>Dates 15th-16th April</Callout>
        <Callout left={809} top={571} w={190} h={50} earX={45} earY={10} size={16} dy={5}>Dates 16th-19th April</Callout>
        <Callout left={625} top={639} w={188} h={65} earX={44} earY={14} size={16} dy={11}>Dates 19th-20th April</Callout>
      </ChartArea>

      <ScrollBar>
        <ScrollButton $w={14}><ChevronIcon dir="left" /></ScrollButton>
        <ScrollTrack />
        <ScrollButton $w={24}><ThumbGrip /></ScrollButton>
        <ScrollButton $w={13}><ChevronIcon dir="right" /></ScrollButton>
      </ScrollBar>

      <Taskbar>
        <StartButton />
        <TaskItem $w={82} />
        <TaskItem $w={83} />
        <TaskItem $w={82} />
        <TaskItem $w={82} />
        <TaskGap />
        <TaskItem $w={24} $light />
        <TaskGap />
        <TrayArea />
      </Taskbar>
    </Window>
  );
}
